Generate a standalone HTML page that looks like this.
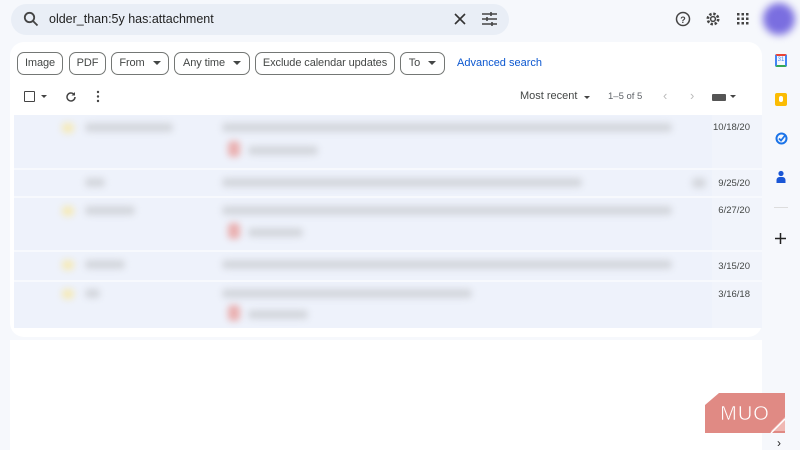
<!DOCTYPE html>
<html><head><meta charset="utf-8"><style>
*{margin:0;padding:0;box-sizing:border-box}
body{width:800px;height:450px;overflow:hidden;background:#f6f8fc;font-family:"Liberation Sans",sans-serif;position:relative;color:#1f1f1f}
.abs{position:absolute}
.search{left:11px;top:4px;width:498px;height:31px;background:#e9eef6;border-radius:16px}
.chip{position:absolute;top:52px;height:23px;border:1px solid #747775;border-radius:7px;font-size:11px;color:#444746;line-height:21px;text-align:center;white-space:nowrap;background:#fff;letter-spacing:-0.1px}
.chip .c{display:inline-block;margin-left:8px;border-left:4px solid transparent;border-right:4px solid transparent;border-top:4px solid #444746;vertical-align:middle}
.panel{left:10px;top:42px;width:752px;height:295px;background:#fff;border-radius:14px}
.list{left:14px;top:115px;width:698px;height:213px;background:#eef2fb}
.bar{position:absolute;height:9px;background:#d3d6dc;border-radius:4px;filter:blur(3.5px)}
.date{position:absolute;font-size:9.5px;color:#444746;right:50px}
.sep{position:absolute;left:14px;width:748px;height:2px;background:#f7f9fd}
</style></head><body>
<div class="abs search"></div>
<svg class="abs" style="left:23px;top:11px" width="16" height="16" viewBox="0 0 16 16"><circle cx="6.5" cy="6.5" r="4.7" fill="none" stroke="#444" stroke-width="1.8"/><path d="M10 10l4.5 4.5" stroke="#444" stroke-width="1.8"/></svg>
<div class="abs" style="left:49px;top:12px;font-size:12.5px;color:#1f1f1f">older_than:5y has:attachment</div>
<svg class="abs" style="left:454px;top:13px" width="12" height="12"><path d="M1 1l10 10M11 1L1 11" stroke="#333" stroke-width="1.6"/></svg>
<svg class="abs" style="left:482px;top:12px" width="15" height="14"><path d="M0 2h15M0 7h15M0 12h15" stroke="#444" stroke-width="1.5"/><path d="M9 0v4M5 5v4M10 10v4" stroke="#444" stroke-width="1.6"/></svg>
<svg class="abs" style="left:675px;top:11px" width="16" height="16"><circle cx="8" cy="8" r="6.5" fill="none" stroke="#444" stroke-width="1.5"/><text x="8" y="12" font-size="9" text-anchor="middle" fill="#444" font-family="Liberation Sans" font-weight="bold">?</text></svg>
<svg class="abs" style="left:705px;top:11px" width="16" height="16" viewBox="0 0 16 16"><circle cx="8" cy="8" r="5.2" fill="none" stroke="#444" stroke-width="2.6" stroke-dasharray="2.4 1.7"/><circle cx="8" cy="8" r="2.4" fill="none" stroke="#444" stroke-width="1.5"/></svg>
<svg class="abs" style="left:737px;top:13px" width="12" height="12"><g fill="#444"><rect x="0" y="0" width="2.5" height="2.5"/><rect x="4.5" y="0" width="2.5" height="2.5"/><rect x="9" y="0" width="2.5" height="2.5"/><rect x="0" y="4.5" width="2.5" height="2.5"/><rect x="4.5" y="4.5" width="2.5" height="2.5"/><rect x="9" y="4.5" width="2.5" height="2.5"/><rect x="0" y="9" width="2.5" height="2.5"/><rect x="4.5" y="9" width="2.5" height="2.5"/><rect x="9" y="9" width="2.5" height="2.5"/></g></svg>
<div class="abs" style="left:763px;top:3px;width:32px;height:32px;border-radius:50%;background:#7a6ee0;filter:blur(4px)"></div>

<div class="abs panel"></div>
<div class="chip" style="left:17px;width:46px">Image</div>
<div class="chip" style="left:69px;width:37px">PDF</div>
<div class="chip" style="left:111px;width:58px">From<span class="c"></span></div>
<div class="chip" style="left:174px;width:76px">Any time<span class="c"></span></div>
<div class="chip" style="left:255px;width:140px">Exclude calendar updates</div>
<div class="chip" style="left:400px;width:45px">To<span class="c"></span></div>
<div class="abs" style="left:457px;top:57px;font-size:11px;color:#0b57d0">Advanced search</div>

<div class="abs" style="left:24px;top:91px;width:11px;height:11px;border:1.5px solid #444;border-radius:1px"></div>
<div class="abs" style="left:41px;top:95px;border-left:3px solid transparent;border-right:3px solid transparent;border-top:3px solid #444"></div>
<svg class="abs" style="left:65px;top:91px" width="12" height="12"><path d="M10 6a4 4 0 1 1-1.2-2.9" fill="none" stroke="#444" stroke-width="1.5"/><path d="M10 1v3.5H6.5" fill="#444"/></svg>
<svg class="abs" style="left:96px;top:90px" width="4" height="13"><circle cx="2" cy="2" r="1.2" fill="#444"/><circle cx="2" cy="6.5" r="1.2" fill="#444"/><circle cx="2" cy="11" r="1.2" fill="#444"/></svg>
<div class="abs" style="left:520px;top:90px;font-size:11px;color:#444746">Most recent</div>
<div class="abs" style="left:584px;top:96px;border-left:3px solid transparent;border-right:3px solid transparent;border-top:3px solid #444"></div>
<div class="abs" style="left:608px;top:91px;font-size:9.5px;color:#5f6368">1–5 of 5</div>
<div class="abs" style="left:663px;top:88px;font-size:13px;color:#bbb">‹</div>
<div class="abs" style="left:690px;top:88px;font-size:13px;color:#bbb">›</div>
<div class="abs" style="left:712px;top:94px;width:14px;height:7px;background:#555;border-radius:1px"></div>
<div class="abs" style="left:730px;top:95px;border-left:3px solid transparent;border-right:3px solid transparent;border-top:3px solid #444"></div>

<div class="abs list"></div>
<div class="abs" style="left:712px;top:115px;width:50px;height:213px;background:#f1f4fb"></div>
<div class="sep" style="top:168px"></div><div class="sep" style="top:196px"></div><div class="sep" style="top:250px"></div><div class="sep" style="top:280px"></div>
<div class="bar" style="left:62px;top:123px;width:12px;height:10px;background:#f5eab8"></div>
<div class="bar" style="left:85px;top:123px;width:88px"></div>
<div class="bar" style="left:222px;top:123px;width:450px"></div>
<div class="bar" style="left:228px;top:141px;width:12px;height:16px;background:#eab0b0"></div>
<div class="bar" style="left:248px;top:146px;width:70px"></div>
<div class="bar" style="left:85px;top:178px;width:20px"></div>
<div class="bar" style="left:222px;top:178px;width:360px"></div>
<div class="bar" style="left:692px;top:178px;width:14px;height:10px"></div>
<div class="bar" style="left:62px;top:206px;width:12px;height:10px;background:#f5eab8"></div>
<div class="bar" style="left:85px;top:206px;width:50px"></div>
<div class="bar" style="left:222px;top:206px;width:450px"></div>
<div class="bar" style="left:228px;top:223px;width:12px;height:16px;background:#eab0b0"></div>
<div class="bar" style="left:248px;top:228px;width:55px"></div>
<div class="bar" style="left:62px;top:260px;width:12px;height:10px;background:#f5eab8"></div>
<div class="bar" style="left:85px;top:260px;width:40px"></div>
<div class="bar" style="left:222px;top:260px;width:450px"></div>
<div class="bar" style="left:62px;top:289px;width:12px;height:10px;background:#f5eab8"></div>
<div class="bar" style="left:85px;top:289px;width:15px"></div>
<div class="bar" style="left:222px;top:289px;width:250px"></div>
<div class="bar" style="left:228px;top:305px;width:12px;height:16px;background:#eab0b0"></div>
<div class="bar" style="left:248px;top:310px;width:60px"></div>
<div class="date" style="top:122px">10/18/20</div>
<div class="date" style="top:178px">9/25/20</div>
<div class="date" style="top:205px">6/27/20</div>
<div class="date" style="top:261px">3/15/20</div>
<div class="date" style="top:289px">3/16/18</div>

<div class="abs" style="left:10px;top:340px;width:752px;height:110px;background:#fff"></div>

<div class="abs" style="left:775px;top:54px;width:12px;height:13px;border:2px solid #4285f4;border-top-color:#ea4335;border-bottom-color:#34a853;border-radius:2px;font-size:6px;color:#4285f4;text-align:center;line-height:9px">31</div>
<div class="abs" style="left:775px;top:93px;width:12px;height:13px;background:#fbbc04;border-radius:2px"></div>
<div class="abs" style="left:779px;top:96px;width:4px;height:6px;background:#fff;border-radius:2px"></div>
<svg class="abs" style="left:775px;top:132px" width="13" height="13"><circle cx="6.5" cy="6.5" r="5" fill="none" stroke="#1a73e8" stroke-width="2"/><path d="M4 6.5l2 2 4-5" fill="none" stroke="#1a73e8" stroke-width="1.8"/></svg>
<svg class="abs" style="left:776px;top:170px" width="10" height="13"><circle cx="5" cy="3.5" r="2.6" fill="#1a56d6"/><path d="M0.5 13v-3a3 3 0 0 1 3-3h3a3 3 0 0 1 3 3v3z" fill="#1a56d6"/></svg>
<div class="abs" style="left:774px;top:207px;width:14px;height:1px;background:#ddd"></div>
<svg class="abs" style="left:775px;top:233px" width="11" height="11"><path d="M5.5 0v11M0 5.5h11" stroke="#222" stroke-width="1.5"/></svg>
<div class="abs" style="left:777px;top:436px;font-size:12px;color:#222">›</div>

<svg class="abs" style="left:705px;top:393px" width="80" height="40"><path d="M14 0h68v40H0V12z" fill="#e08a84"/><path d="M80 24L66 38h14z" fill="#f0b8b3"/><path d="M66 40L80 26" stroke="#fff" stroke-width="1.5"/><text x="40" y="27" text-anchor="middle" font-family="Liberation Sans" font-size="20" fill="#fff" stroke="#e08a84" stroke-width="0.5" letter-spacing="1">MUO</text></svg>
</body></html>
